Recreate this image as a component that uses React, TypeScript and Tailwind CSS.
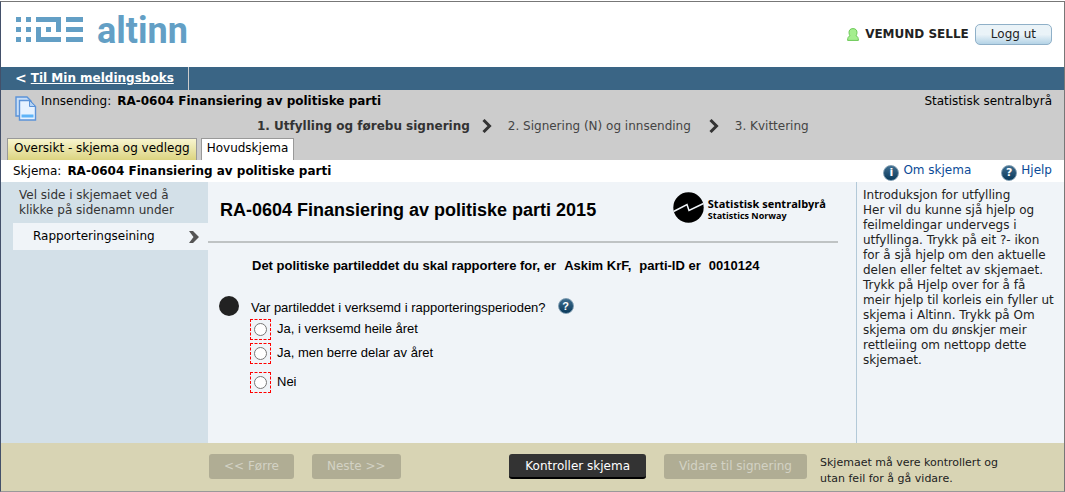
import React, { useState } from 'react'

type BadgeProps = {
  glyph: string
}

const options = [
  { value: 'heile', label: 'Ja, i verksemd heile året', row: 'mb-[3px]' },
  { value: 'delar', label: 'Ja, men berre delar av året', row: 'mb-2' },
  { value: 'nei', label: 'Nei', row: '' },
]

function AltinnMark() {
  return (
    <svg width="67" height="26" viewBox="0 0 67 26" fill="#639fc5" aria-hidden="true">
      <path d="M0 0h5v5H0zM10 0h5v5h-5zM0 10h5v5H0zM10 10h5v5h-5zM0 20h5v5H0zM10 20h5v5h-5z" />
      <path d="M20 0h25v15h-5V5H20zM20 10h5v10h20v5H20zM30 10h5v5h-5z" />
      <path d="M50 0h17v5H50zM50 10h17v5H50zM50 20h17v5H50z" />
    </svg>
  )
}

function UserIcon() {
  return (
    <svg width="12" height="13" viewBox="0 0 12 13" aria-hidden="true">
      <path
        d="M6 .6C3.300.6 2 2.200 2 4.500c0 1.400.4 2.400 1 3.200C1.300 8.400.6 9.800.6 12.400h10.800c0-2.600-.7-4-2.400-4.700.6-.8 1-1.800 1-3.200C10 2.200 8.700.6 6 .6z"
        fill="#a4ee8e"
        stroke="#6cc957"
      />
    </svg>
  )
}

function DocumentsIcon() {
  return (
    <svg width="22" height="26" viewBox="0 0 22 26" aria-hidden="true">
      <path d="M1 1h11l4 4v15H1z" fill="#c9dff8" stroke="#5b93d8" strokeWidth="1.4" />
      <path d="M4.500 4.500h10l6 6v13.500h-16z" fill="#e6f2ff" stroke="#5b93d8" strokeWidth="1.400" />
      <path d="M14.500 4.500v6h6z" fill="#b5d4f5" stroke="#5b93d8" />
      <path d="M6.500 18.500h12v3h-12z" fill="#5eb4f8" />
    </svg>
  )
}

function StepArrow() {
  return (
    <svg width="10" height="14" viewBox="0 0 10 14" fill="none" stroke="#333" strokeWidth="3" aria-hidden="true">
      <path d="M1.500 1l6 6-6 6" />
    </svg>
  )
}

function SsbMark() {
  return (
    <svg width="31" height="31" viewBox="0 0 31 31" aria-hidden="true">
      <circle cx="15.500" cy="15.500" r="15.200" fill="#000" />
      <path d="M.5 19.500L14 12.500l2 6L30.500 11.500" fill="none" stroke="#f0f4f8" strokeWidth="1.500" />
    </svg>
  )
}

function Badge({ glyph }: BadgeProps) {
  return (
    <span className="flex h-4 w-4 shrink-0 items-center justify-center rounded-full border border-[#7d9bb0] bg-linear-to-b from-[#3e6d8e] to-[#083a5c] text-[11px] leading-3 font-bold text-white">
      {glyph}
    </span>
  )
}

function Header() {
  return (
    <header className="flex h-[65px] items-start justify-between bg-white pr-3 pl-[15px]">
      <div className="flex items-start gap-[14px] pt-[15px] text-[#639fc5]">
        <AltinnMark />
        <span className="font-['Roboto',sans-serif] text-4xl leading-7 font-bold">altinn</span>
      </div>
      <div className="flex items-center pt-[22px]">
        <UserIcon />
        <span className="mr-1.5 ml-1.5 font-bold text-[#222]">VEMUND SELLE</span>
        <button
          type="button"
          className="h-[21px] rounded-[5px] border border-[#8fb0c8] bg-linear-to-b from-[#eaf3f8] from-50% to-[#b4d3e6] px-[15px] text-[#222]"
        >
          Logg ut
        </button>
      </div>
    </header>
  )
}

function Steps() {
  return (
    <ol className="flex items-center pb-1 pl-[256px] text-[#444]">
      <li className="mr-3 font-bold text-[#333]">1. Utfylling og førebu signering</li>
      <StepArrow />
      <li className="mr-[18px] ml-4">2. Signering (N) og innsending</li>
      <StepArrow />
      <li className="ml-4">3. Kvittering</li>
    </ol>
  )
}

function Sidebar() {
  return (
    <nav className="w-[207px] shrink-0 bg-[#d3e0e8] pt-1.5 pl-3">
      <p className="pl-1.5 text-[#333]">
        Vel side i skjemaet ved å
        <br />
        klikke på sidenamn under
      </p>
      <a href="#eining" className="mt-[5px] flex h-[27px] items-center justify-between bg-[#f0f4f8] pr-2 pl-5 text-black">
        Rapporteringseining
        <svg width="12" height="12" viewBox="0 0 12 12" fill="#555" aria-hidden="true">
          <path d="M1 0h4l6 6-6 6H1l4.500-6z" />
        </svg>
      </a>
    </nav>
  )
}

function Form() {
  const [answer, setAnswer] = useState('')

  return (
    <main className="min-w-0 flex-1 font-['Liberation_Sans',Arial,sans-serif] text-[13px] text-black">
      <div className="mr-[18px] flex h-[61px] items-center justify-between border-b-2 border-[#bfc3c4] pr-3 pl-3">
        <h1 className="pb-1 text-lg leading-5 font-bold">RA-0604 Finansiering av politiske parti 2015</h1>
        <div className="flex items-center gap-1 pb-2">
          <SsbMark />
          <div className="pt-1 font-['Open_Sans',sans-serif] font-bold">
            <div className="text-[11px] leading-3">Statistisk sentralbyrå</div>
            <div className="text-[9px] leading-3">Statistics Norway</div>
          </div>
        </div>
      </div>
      <p className="mt-[15px] flex gap-2 pl-11 font-bold">
        <span>Det politiske partileddet du skal rapportere for, er</span>
        <span>Askim KrF,</span>
        <span>parti-ID er</span>
        <span>0010124</span>
      </p>
      <fieldset className="mt-[23px] pl-[11px]">
        <legend className="flex items-center">
          <span className="h-5 w-5 rounded-full bg-[#222]" />
          <span className="mr-3 ml-3 pt-0.5">Var partileddet i verksemd i rapporteringsperioden?</span>
          <Badge glyph="?" />
        </legend>
        <div className="pt-[3px] pl-[31px]">
          {options.map((option) => (
            <label key={option.value} className={`flex items-center gap-1.5 ${option.row}`}>
              <span className="flex h-[21px] w-[21px] items-center justify-center border border-dashed border-[#f00]">
                <input
                  type="radio"
                  name="verksemd"
                  value={option.value}
                  checked={answer === option.value}
                  onChange={() => setAnswer(option.value)}
                  className="h-[13px] w-[13px]"
                />
              </span>
              <span className="pb-0.5">{option.label}</span>
            </label>
          ))}
        </div>
      </fieldset>
    </main>
  )
}

function Footer() {
  const disabledButton = 'h-[25px] rounded-[3px] bg-[#b0ad94] px-[15px] text-[#d3d2c4]'

  return (
    <footer className="flex h-12 items-start bg-[#d8d4b4] pt-[11px] pl-[208px]">
      <button type="button" disabled className={disabledButton}>&lt;&lt; Førre</button>
      <button type="button" disabled className={`ml-[18px] ${disabledButton}`}>Neste &gt;&gt;</button>
      <div className="ml-auto flex pr-[18px]">
        <button type="button" className="h-[25px] rounded-[3px] border-b-2 border-black bg-[#333] px-4 pt-0.5 text-white">
          Kontroller skjema
        </button>
        <button type="button" disabled className={`ml-[18px] ${disabledButton}`}>Vidare til signering</button>
        <p className="ml-[13px] w-[226px] pt-px text-[11px] leading-4 text-[#222]">
          Skjemaet må vere kontrollert og
          <br />
          utan feil for å gå vidare.
        </p>
      </div>
    </footer>
  )
}

export default function App() {
  return (
    <div className="flex min-h-screen flex-col pt-px font-['DejaVu_Sans',Verdana,sans-serif] text-xs leading-[15px]">
      <div className="flex flex-1 flex-col border border-t-[#777] border-r-[#777] border-b-[#999] border-l-[#43506a]">
        <Header />
        <div className="flex h-[23px] bg-[#3a6585] text-white">
          <a href="#meldingsboks" className="flex items-center gap-1 border-r border-[#ccc] pr-[14px] pl-[14px] font-bold">
            <span className="text-sm leading-[15px]">&lt;</span>
            <span className="underline">Til Min meldingsboks</span>
          </a>
        </div>
        <section className="flex h-[70px] flex-col justify-between bg-[#ccc] text-black">
          <div className="flex h-7 items-start justify-between pr-3 pl-[14px]">
            <div className="flex gap-1 pt-1">
              <div className="pt-[2px]">
                <DocumentsIcon />
              </div>
              <p className="flex gap-1.5">
                Innsending: <b>RA-0604 Finansiering av politiske parti</b>
              </p>
            </div>
            <p className="pt-1">Statistisk sentralbyrå</p>
          </div>
          <Steps />
          <div className="flex items-end gap-1 pl-1.5">
            <a
              href="#oversikt"
              className="h-[22px] border border-b-0 border-[#999] bg-linear-to-b from-[#f8f5cf] to-[#dcd480] px-1.5 pt-[2px]"
            >
              Oversikt - skjema og vedlegg
            </a>
            <a href="#hovudskjema" className="h-[22px] border border-b-0 border-[#999] bg-white px-[5px] pt-[2px]">
              Hovudskjema
            </a>
          </div>
        </section>
        <div className="flex h-[22px] items-center justify-between bg-white pr-3 pl-3 text-black">
          <p className="flex gap-1.5">
            Skjema: <b>RA-0604 Finansiering av politiske parti</b>
          </p>
          <div className="flex gap-[30px] text-[#0b4a97]">
            <a href="#om" className="flex gap-1">
              <span className="pt-[3px]"><Badge glyph="i" /></span>
              <span className="pt-px">Om skjema</span>
            </a>
            <a href="#hjelp" className="flex gap-1">
              <span className="pt-[3px]"><Badge glyph="?" /></span>
              <span className="pt-px">Hjelp</span>
            </a>
          </div>
        </div>
        <div className="flex flex-1 bg-[#f0f4f8]">
          <Sidebar />
          <Form />
          <aside className="w-[208px] shrink-0 border-l border-[#b3c9d8] pt-1.5 pr-1 pl-1.5 text-[#222]">
            <p>Introduksjon for utfylling</p>
            <p>
              Her vil du kunne sjå hjelp og feilmeldingar undervegs i utfyllinga. Trykk på eit ?- ikon
              <br />
              for å sjå hjelp om den aktuelle delen eller feltet av skjemaet.
              <br />
              Trykk på Hjelp over for å få
              <br />
              meir hjelp til korleis ein fyller ut skjema i Altinn. Trykk på Om skjema om du ønskjer meir rettleiing om
              nettopp dette skjemaet.
            </p>
          </aside>
        </div>
        <Footer />
      </div>
    </div>
  )
}
